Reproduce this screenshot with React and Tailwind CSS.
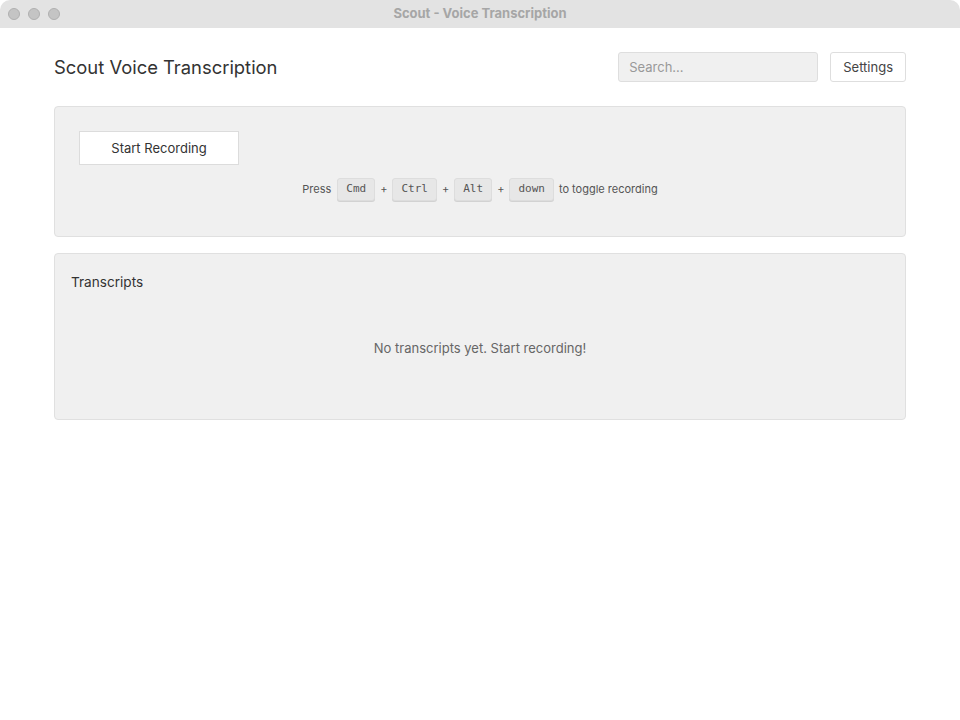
import React from 'react'

const ui = { fontFamily: 'Inter, "Noto Sans", sans-serif' }
const mono = { fontFamily: '"DejaVu Sans Mono", "Liberation Mono", monospace' }

function Key({ children }) {
  return (
    <kbd
      style={mono}
      className="h-[23px] px-2 flex items-center text-[11px] text-[#555] bg-[#e7e7e7] border border-[#dddddd] rounded-[3px] shadow-[0_1px_0_#d2d2d2]"
    >
      {children}
    </kbd>
  )
}

function TitleBar() {
  return (
    <div className="relative h-7 bg-[#e3e3e3] rounded-t-[10px] flex items-center justify-center">
      <div className="absolute left-2 top-0 h-7 flex items-center gap-2">
        <span className="w-3 h-3 rounded-full bg-[#c4c4c4] border border-[#b0b0b0]" />
        <span className="w-3 h-3 rounded-full bg-[#c4c4c4] border border-[#b0b0b0]" />
        <span className="w-3 h-3 rounded-full bg-[#c4c4c4] border border-[#b0b0b0]" />
      </div>
      <span className="text-[13px] font-bold text-[#a6a6a6]">Scout - Voice Transcription</span>
    </div>
  )
}

export default function App() {
  return (
    <div style={ui} className="w-[960px] h-[720px] bg-white overflow-hidden text-[#333]">
      <TitleBar />

      <main className="px-[54px] pt-6">
        <header className="flex items-center justify-between h-[30px]">
          <h1 className="pt-[2px] text-[18.4px] text-[#333]">Scout Voice Transcription</h1>
          <div className="flex items-center gap-3">
            <input
              placeholder="Search..."
              style={ui}
              className="w-[200px] h-[30px] px-2.5 text-[13px] bg-[#f0f0f0] border border-[#dedede] rounded-[3px] placeholder:text-[#999] outline-none"
            />
            <button className="h-[30px] px-3 flex items-center pt-px text-[13px] text-[#444] bg-white border border-[#dedede] rounded-[3px]">
              Settings
            </button>
          </div>
        </header>

        <section className="mt-6 bg-[#f0f0f0] border border-[#e0e0e0] rounded-[4px] p-6 pb-[35px]">
          <button className="w-40 h-[34px] flex items-center justify-center pt-px bg-white border border-[#dcdcdc] text-[13px] text-[#333]">
            Start Recording
          </button>
          <div className="mt-[13px] flex items-center justify-center gap-[5px] text-[11px] text-[#555]">
            <span className="mr-px">Press</span>
            <Key>Cmd</Key>
            <span>+</span>
            <Key>Ctrl</Key>
            <span>+</span>
            <Key>Alt</Key>
            <span>+</span>
            <Key>down</Key>
            <span>to toggle recording</span>
          </div>
        </section>

        <section className="mt-4 bg-[#f0f0f0] border border-[#e0e0e0] rounded-[4px] p-4">
          <h2 className="pt-px text-[13.6px] leading-[22px] text-[#333]">Transcripts</h2>
          <div className="h-[110px] pt-[2px] flex items-center justify-center text-[13px] text-[#666]">
            No transcripts yet. Start recording!
          </div>
        </section>
      </main>
    </div>
  )
}
